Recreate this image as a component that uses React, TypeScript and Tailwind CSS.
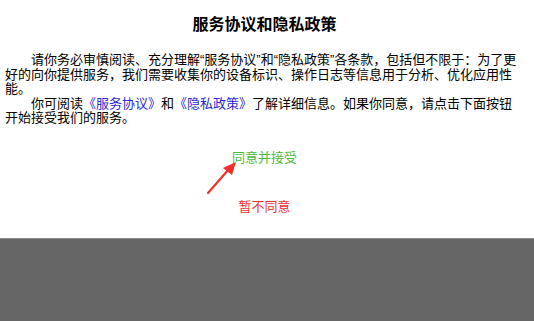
const ArrowMark = () => (
  <svg
    className="absolute left-[204px] top-[158px]"
    width="36"
    height="38"
    viewBox="0 0 36 38"
  >
    <path d="M4 35 L25 11" stroke="#f0302a" strokeWidth="2.2" strokeLinecap="round" />
    <polygon points="32,4 19,10 28,17" fill="#f0302a" />
  </svg>
);

const App = () => {
  return (
    <div
      className="w-[534px] h-[321px] flex flex-col bg-white relative overflow-hidden"
      style={{ fontFamily: '"Liberation Sans", "Noto Sans CJK SC", sans-serif' }}
    >
      <div className="h-[238px] flex flex-col pl-[5px] pr-[10px]">
        <h1 className="mt-[15px] text-center text-[16px] leading-[20px] font-bold text-black">
          服务协议和隐私政策
        </h1>
        <div className="mt-[18px] text-[13px] leading-[14.5px] text-black">
          <p className="indent-[26px]">
            请你务必审慎阅读、充分理解“服务协议”和“隐私政策”各条款，包括但不限于：为了更好的向你提供服务，我们需要收集你的设备标识、操作日志等信息用于分析、优化应用性能。
          </p>
          <p className="indent-[26px]">
            你可阅读<span className="text-[#2a2ad0]">《服务协议》</span>和<span className="text-[#2a2ad0]">《隐私政策》</span>了解详细信息。如果你同意，请点击下面按钮开始接受我们的服务。
          </p>
        </div>
        <div className="flex flex-col items-center text-[13px] leading-[16px]">
          <button className="mt-[24px] text-[#4dbb3a]">同意并接受</button>
          <button className="mt-[33px] text-[#ee3333]">暂不同意</button>
        </div>
      </div>
      <div className="flex-1 bg-[#666666] border-t border-[#8c8c8c]" />
      <ArrowMark />
    </div>
  );
};

export default App;
